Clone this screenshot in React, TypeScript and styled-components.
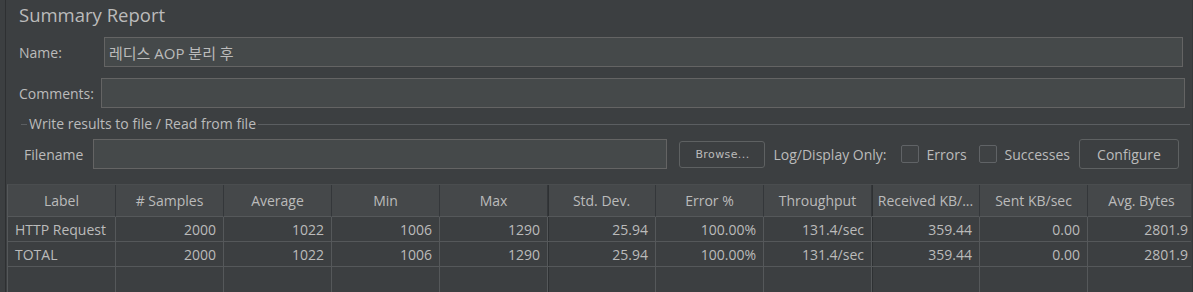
import React from "react";
import styled, { createGlobalStyle } from "styled-components";

const GlobalStyle = createGlobalStyle`
  html, body { margin: 0; padding: 0; background: #3c3f41; overflow: hidden; }
  body {
    font-family: "Open Sans", "Noto Sans CJK KR", sans-serif;
    color: #bbbbbb;
    -webkit-font-smoothing: antialiased;
  }
  * { box-sizing: border-box; }
`;

const Page = styled.div`
  width: 1193px;
  height: 292px;
  overflow: hidden;
  padding-left: 5px;
  display: flex;
`;

const Panel = styled.div`
  flex: 1;
  min-width: 0;
  display: flex;
  flex-direction: column;
  border-left: 1px solid #2e3032;
  border-right: 1px solid #35383a;
`;

const Title = styled.div`
  height: 31px;
  padding: 0 0 0 13px;
  font-size: 18.5px;
  line-height: 29px;
  color: #bbbbbb;
`;

const FieldRow = styled.div<{ $label: number; $inset: number; $top: number }>`
  display: grid;
  grid-template-columns: ${(p) => p.$label}px 1fr;
  align-items: center;
  margin-top: ${(p) => p.$top}px;
  padding: 0 ${(p) => p.$inset}px 0 13px;
  height: 30px;
`;

const Label = styled.span`
  font-size: 14px;
  color: #bbbbbb;
  white-space: nowrap;
`;

const TextBox = styled.div<{ $grow?: boolean }>`
  height: 30px;
  background: #45494a;
  border: 1px solid #646464;
  padding: 0 4px;
  display: flex;
  align-items: center;
  font-size: 15px;
  color: #bbbbbb;
  ${(p) => (p.$grow ? "flex: 1; min-width: 0;" : "")}
`;

const Group = styled.fieldset`
  margin: 7px 2px 0 15px;
  padding: 0 0 0 3px;
  border: none;
  border-top: 1px solid #5b5e61;
  min-width: 0;
`;

const Legend = styled.legend`
  margin-left: 3px;
  padding: 0 2px;
  font-size: 14px;
  line-height: 18px;
  color: #bbbbbb;
`;

const FileRow = styled.div`
  display: flex;
  align-items: center;
  height: 30px;
  margin-top: 6px;
  padding-right: 11px;
`;

const FileLabel = styled(Label)`
  width: 69px;
  flex: none;
`;

const Button = styled.div<{ $small?: boolean }>`
  flex: none;
  display: flex;
  align-items: center;
  justify-content: center;
  border: 1px solid #5e6162;
  border-radius: 3px;
  background: #3c3f41;
  color: #bbbbbb;
  ${(p) =>
    p.$small
      ? `width: 86px; height: 27px; font-family: "DejaVu Sans", sans-serif; font-size: 11px; letter-spacing: 0.4px;`
      : `width: 100px; height: 30px; font-size: 14px;`}
`;

const Spaced = styled.span<{ $ml: number }>`
  margin-left: ${(p) => p.$ml}px;
  display: flex;
  align-items: center;
  flex: none;
  font-size: 14px;
  white-space: nowrap;
`;

const Check = styled.span`
  width: 18px;
  height: 18px;
  border: 1px solid #606366;
  border-radius: 2px;
  background: #3f4244;
  flex: none;
`;

const TableWrap = styled.div`
  margin: 15px 1px 0 1px;
  flex: 1;
  overflow: hidden;
`;

const Grid = styled.div`
  display: grid;
  grid-template-columns: repeat(11, 108px);
  width: 1188px;
  border-top: 1px solid #4a4d4f;
  border-left: 1px solid #55585a;
`;

const HeadCell = styled.div<{ $thick?: boolean }>`
  height: 32px;
  display: flex;
  align-items: center;
  justify-content: center;
  background: #45484a;
  border-right: 1px solid #34373a;
  border-bottom: 1px solid #55585a;
  font-size: 14px;
  color: #bbbbbb;
  white-space: nowrap;
  overflow: hidden;
  ${(p) => (p.$thick ? "box-shadow: inset 1px 0 #2e3133;" : "")}
`;

const Cell = styled.div<{ $left?: boolean; $thick?: boolean; $filler?: boolean }>`
  height: ${(p) => (p.$filler ? "40px" : "25px")};
  display: flex;
  align-items: center;
  justify-content: ${(p) => (p.$left ? "flex-start" : "flex-end")};
  padding: ${(p) => (p.$left ? "0 0 0 7px" : "0 7px 0 0")};
  border-right: 1px solid #55585a;
  border-bottom: ${(p) => (p.$filler ? "none" : "1px solid #55585a")};
  font-size: 14px;
  color: #bbbbbb;
  white-space: nowrap;
  ${(p) => (p.$thick ? "box-shadow: inset 1px 0 #2e3133;" : "")}
`;

const headers = [
  "Label",
  "# Samples",
  "Average",
  "Min",
  "Max",
  "Std. Dev.",
  "Error %",
  "Throughput",
  "Received KB/...",
  "Sent KB/sec",
  "Avg. Bytes",
];

const rows = [
  ["HTTP Request", "2000", "1022", "1006", "1290", "25.94", "100.00%", "131.4/sec", "359.44", "0.00", "2801.9"],
  ["TOTAL", "2000", "1022", "1006", "1290", "25.94", "100.00%", "131.4/sec", "359.44", "0.00", "2801.9"],
];

const thick = (i: number) => i === 5 || i === 8;

export default function App() {
  return (
    <>
      <GlobalStyle />
      <Page>
        <Panel>
          <Title>Summary Report</Title>
          <FieldRow $label={85} $inset={9} $top={6}>
            <Label>Name:</Label>
            <TextBox>레디스 AOP 분리 후</TextBox>
          </FieldRow>
          <FieldRow $label={82} $inset={7} $top={11}>
            <Label>Comments:</Label>
            <TextBox />
          </FieldRow>
          <Group>
            <Legend>Write results to file / Read from file</Legend>
            <FileRow>
              <FileLabel>Filename</FileLabel>
              <TextBox $grow />
              <Spaced $ml={12}>
                <Button $small>Browse...</Button>
              </Spaced>
              <Spaced $ml={8}>Log/Display Only:</Spaced>
              <Spaced $ml={14}>
                <Check />
              </Spaced>
              <Spaced $ml={8}>Errors</Spaced>
              <Spaced $ml={12}>
                <Check />
              </Spaced>
              <Spaced $ml={8}>Successes</Spaced>
              <Spaced $ml={9}>
                <Button>Configure</Button>
              </Spaced>
            </FileRow>
          </Group>
          <TableWrap>
            <Grid>
              {headers.map((h, i) => (
                <HeadCell key={h} $thick={thick(i)}>
                  {h}
                </HeadCell>
              ))}
              {rows.map((r, ri) =>
                r.map((v, i) => (
                  <Cell key={`${ri}-${i}`} $left={i === 0} $thick={thick(i)}>
                    {v}
                  </Cell>
                ))
              )}
              {headers.map((h, i) => (
                <Cell key={`f-${h}`} $filler $thick={thick(i)} />
              ))}
            </Grid>
          </TableWrap>
        </Panel>
      </Page>
    </>
  );
}
